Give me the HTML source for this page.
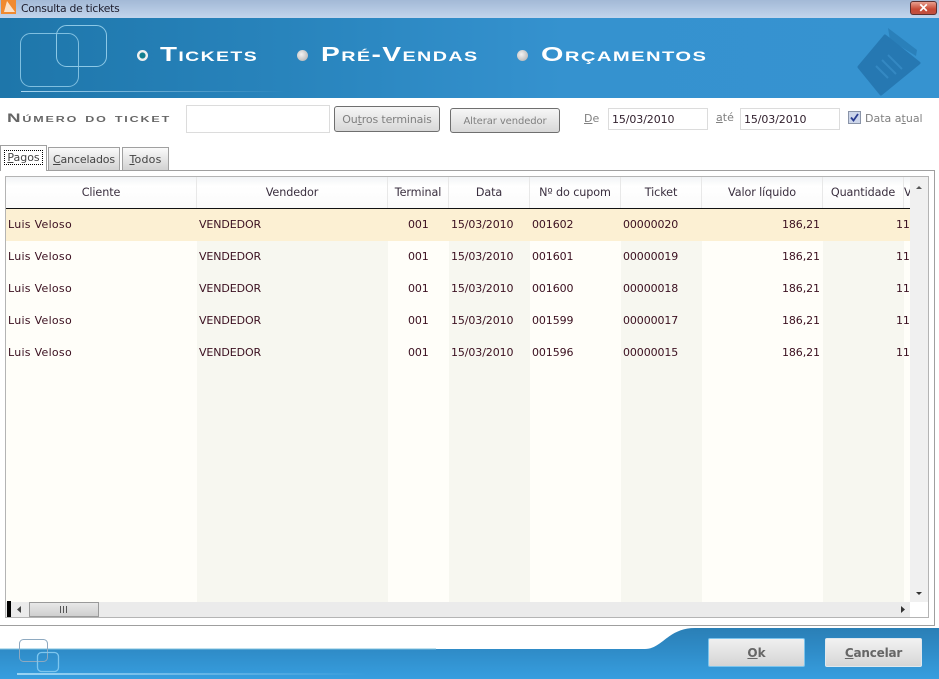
<!DOCTYPE html>
<html><head><meta charset="utf-8"><style>
*{box-sizing:border-box}
html,body{margin:0;padding:0;width:939px;height:679px;overflow:hidden;background:#fff}
body{position:relative;font-family:"DejaVu Sans",sans-serif;font-size:11px;color:#2a1a2a}
.a{position:absolute;white-space:nowrap}
.h{position:absolute;top:177px;height:31px;line-height:32px;text-align:center;color:#3a2f3f;font-size:11.2px;letter-spacing:-.1px;overflow:hidden;border-right:1px solid #e8e8e8}
.c{position:absolute;height:32px;line-height:32px;color:#3b1020;font-size:11px;letter-spacing:-.1px;white-space:nowrap}
.n{letter-spacing:.28px}
.nav{position:absolute;top:44px;color:#fff;font-family:"Liberation Sans",sans-serif;font-weight:bold;font-variant:small-caps;font-size:20px;line-height:22px;transform-origin:0 0;white-space:nowrap;letter-spacing:1px}
.dot{position:absolute;top:50px;width:11px;height:11px;border-radius:50%;background:radial-gradient(circle at 40% 40%,#f2f2f2,#aaa)}
.btn{position:absolute;border:1px solid #6f6f6f;border-radius:3px;background:linear-gradient(#f6f6f6,#d8d8d8);color:#808080;text-align:center}
.inp{position:absolute;border:1px solid #dcdcdc;background:#fff}
.tab{position:absolute;border:1px solid #a0a0a0;border-bottom:none;background:linear-gradient(#fafafa,#d2d2d2);color:#444;text-align:center;font-size:11px}
u{text-decoration:underline}
</style></head><body>
<!-- Title bar -->
<div class="a" style="left:0;top:0;width:939px;height:18px;background:linear-gradient(#a3b9d6,#c2d5ec)"></div>
<svg class="a" style="left:1px;top:0" width="16" height="15"><rect x="0" y="0" width="15" height="14" fill="#f08a30"/><path d="M3 12 L6 1 L14 12Z" fill="#fbe2c8"/></svg>
<div class="a" style="left:21px;top:1px;line-height:15px;font-size:10.8px;letter-spacing:-.25px;color:#1c1c2c">Consulta de tickets</div>
<div class="a" style="left:910px;top:1px;width:27px;height:14px;border:1px solid #5c3030;border-radius:3px;background:linear-gradient(#e9a090,#c84a35 60%,#c05040);color:#fff;font:bold 12px/12px 'Liberation Sans',sans-serif;text-align:center">✕</div>
<!-- Header -->
<div class="a" style="left:0;top:18px;width:939px;height:80px;background:linear-gradient(90deg,#1e76aa,#2a86bf 35%,#3592cf 60%,#3693d0)"></div>
<svg class="a" style="left:0;top:0" width="939" height="98" fill="none">
<defs><linearGradient id="l"><stop offset="0" stop-color="#a9d6f0"/><stop offset="1" stop-color="#a9d6f0" stop-opacity="0"/></linearGradient></defs>
<rect x="20.500" y="33.500" width="58" height="53" rx="10" stroke="#7fbfe0"/>
<rect x="56.500" y="25.500" width="50" height="41" rx="10" stroke="#8cc8e6"/>
<rect x="21" y="91" width="265" height="1" fill="url(#l)"/>
<path d="M888 28 L917 50 L916 56 L890 40Z" fill="#2a80ba"/>
<path d="M885 36 L919 63 L881 94 L859 67Z" fill="#2678b2" stroke="#2678b2" stroke-width="3" stroke-linejoin="round"/>
<path d="M876 66 L888 78 M882 60 L896 74 M888 55 L902 69" stroke="#3488c2" stroke-width="2"/>
</svg>
<div class="dot" style="left:137px;background:radial-gradient(circle,#127f8f 0 2.800px,#f0f0f0 3.300px)"></div>
<div class="nav" style="left:160px;transform:scaleX(1.39)">Tickets</div>
<div class="dot" style="left:297px"></div>
<div class="nav" style="left:321px;transform:scaleX(1.41)">Pré-Vendas</div>
<div class="dot" style="left:517px"></div>
<div class="nav" style="left:541px;transform:scaleX(1.44)">Orçamentos</div>
<!-- Filter row -->
<div class="a" style="left:7px;top:111px;font:bold 12px/15px 'Liberation Sans',sans-serif;font-variant:small-caps;color:#666;letter-spacing:1.2px;transform:scaleX(1.56);transform-origin:0 0">Número do ticket</div>
<div class="inp" style="left:186px;top:105px;width:144px;height:28px"></div>
<div class="btn" style="left:334px;top:106px;width:106px;height:26px;line-height:25px;font-size:11px;letter-spacing:-.15px">Ou<u>t</u>ros terminais</div>
<div class="btn" style="left:450px;top:108px;width:110px;height:25px;line-height:26px;font-size:10px;letter-spacing:-.1px">Alterar vendedor</div>
<div class="a" style="left:584px;top:112px;line-height:14px;color:#808080"><u>D</u>e</div>
<div class="inp" style="left:608px;top:108px;width:100px;height:22px;line-height:21px;padding-left:3px;color:#33222f;letter-spacing:-.1px">15/03/2010</div>
<div class="a" style="left:716px;top:111px;line-height:14px;color:#808080"><u>a</u>té</div>
<div class="inp" style="left:740px;top:108px;width:100px;height:22px;line-height:21px;padding-left:3px;color:#33222f;letter-spacing:-.1px">15/03/2010</div>
<svg class="a" style="left:848px;top:111px" width="14" height="14"><rect x=".5" y=".5" width="12" height="12" fill="#cdd6ea" stroke="#8a94a8"/><path d="M3 6.500 L5.500 9.500 L10 3" fill="none" stroke="#2a3c90" stroke-width="1.800"/></svg>
<div class="a" style="left:865px;top:112px;line-height:14px;color:#808080;letter-spacing:0">Data a<u>t</u>ual</div>
<!-- Panel -->
<div class="a" style="left:-2px;top:170px;width:937px;height:456px;border:1px solid #9f9f9f;background:#fff"></div>
<div class="tab" style="left:0;top:145px;width:47px;height:26px;background:#fff;line-height:24px;z-index:2"><span style="border:1px dotted #000;padding:0 2px"><u>P</u>agos</span></div>
<div class="tab" style="left:48px;top:147px;width:72px;height:23px;line-height:24px;letter-spacing:-.15px"><u>C</u>ancelados</div>
<div class="tab" style="left:122px;top:147px;width:47px;height:23px;line-height:24px;letter-spacing:.2px"><u>T</u>odos</div>
<!-- Grid -->
<div class="a" style="left:5px;top:176px;width:924px;height:442px;border:1px solid #b4b4b4;background:#fff"></div>
<div class="a" style="left:6px;top:177px;width:904px;height:31px;background:linear-gradient(#f2f4f6,#fff 30%,#fafafa)"></div>
<div class="h" style="left:6px;width:191px">Cliente</div>
<div class="h" style="left:197px;width:191px">Vendedor</div>
<div class="h" style="left:388px;width:61px">Terminal</div>
<div class="h" style="left:449px;width:81px">Data</div>
<div class="h" style="left:530px;width:91px">Nº do cupom</div>
<div class="h" style="left:621px;width:81px">Ticket</div>
<div class="h" style="left:702px;width:121px">Valor líquido</div>
<div class="h" style="left:823px;width:81px">Quantidade</div>
<div class="h" style="left:904px;width:6px;border:0;text-align:left;overflow:hidden">V</div>
<div class="a" style="left:6px;top:208px;width:904px;height:1px;background:#111"></div>
<!-- column backgrounds -->
<div class="a" style="left:6px;top:209px;width:191px;height:393px;background:#fffef9"></div>
<div class="a" style="left:197px;top:209px;width:191px;height:393px;background:#f7f7f0"></div>
<div class="a" style="left:388px;top:209px;width:61px;height:393px;background:#fffef9"></div>
<div class="a" style="left:449px;top:209px;width:81px;height:393px;background:#f7f7f0"></div>
<div class="a" style="left:530px;top:209px;width:91px;height:393px;background:#fffef9"></div>
<div class="a" style="left:621px;top:209px;width:81px;height:393px;background:#f7f7f0"></div>
<div class="a" style="left:702px;top:209px;width:121px;height:393px;background:#fffef9"></div>
<div class="a" style="left:823px;top:209px;width:81px;height:393px;background:#f7f7f0"></div>
<div class="a" style="left:904px;top:209px;width:6px;height:393px;background:#fffef9"></div>
<div class="a" style="left:6px;top:209px;width:904px;height:32px;background:#fcf0d3"></div>
<!-- rows -->
<div class="c n" style="left:8px;top:209px">Luis Veloso</div><div class="c" style="left:199px;top:209px">VENDEDOR</div><div class="c" style="left:408px;top:209px">001</div><div class="c" style="left:451px;top:209px">15/03/2010</div><div class="c" style="left:532px;top:209px">001602</div><div class="c" style="left:623px;top:209px">00000020</div><div class="c" style="left:782px;top:209px">186,21</div><div class="c" style="left:896px;top:209px;width:13px;overflow:hidden">11</div>
<div class="c n" style="left:8px;top:241px">Luis Veloso</div><div class="c" style="left:199px;top:241px">VENDEDOR</div><div class="c" style="left:408px;top:241px">001</div><div class="c" style="left:451px;top:241px">15/03/2010</div><div class="c" style="left:532px;top:241px">001601</div><div class="c" style="left:623px;top:241px">00000019</div><div class="c" style="left:782px;top:241px">186,21</div><div class="c" style="left:896px;top:241px;width:13px;overflow:hidden">11</div>
<div class="c n" style="left:8px;top:273px">Luis Veloso</div><div class="c" style="left:199px;top:273px">VENDEDOR</div><div class="c" style="left:408px;top:273px">001</div><div class="c" style="left:451px;top:273px">15/03/2010</div><div class="c" style="left:532px;top:273px">001600</div><div class="c" style="left:623px;top:273px">00000018</div><div class="c" style="left:782px;top:273px">186,21</div><div class="c" style="left:896px;top:273px;width:13px;overflow:hidden">11</div>
<div class="c n" style="left:8px;top:305px">Luis Veloso</div><div class="c" style="left:199px;top:305px">VENDEDOR</div><div class="c" style="left:408px;top:305px">001</div><div class="c" style="left:451px;top:305px">15/03/2010</div><div class="c" style="left:532px;top:305px">001599</div><div class="c" style="left:623px;top:305px">00000017</div><div class="c" style="left:782px;top:305px">186,21</div><div class="c" style="left:896px;top:305px;width:13px;overflow:hidden">11</div>
<div class="c n" style="left:8px;top:337px">Luis Veloso</div><div class="c" style="left:199px;top:337px">VENDEDOR</div><div class="c" style="left:408px;top:337px">001</div><div class="c" style="left:451px;top:337px">15/03/2010</div><div class="c" style="left:532px;top:337px">001596</div><div class="c" style="left:623px;top:337px">00000015</div><div class="c" style="left:782px;top:337px">186,21</div><div class="c" style="left:896px;top:337px;width:13px;overflow:hidden">11</div>
<!-- scrollbars -->
<div class="a" style="left:910px;top:177px;width:18px;height:425px;background:#f0f0f0"></div>
<svg class="a" style="left:910px;top:177px" width="18" height="425"><path d="M6 12 L9 9 L12 12Z" fill="#555"/><path d="M6 415 L9 418 L12 415Z" fill="#333"/></svg>
<div class="a" style="left:6px;top:602px;width:904px;height:15px;background:#ebebeb"></div>
<div class="a" style="left:7px;top:601px;width:4px;height:16px;background:#000"></div>
<svg class="a" style="left:11px;top:602px" width="18" height="15"><path d="M10 4 L6 7.500 L10 11Z" fill="#444"/></svg>
<div class="a" style="left:29px;top:602px;width:70px;height:15px;border:1px solid #9a9a9a;background:linear-gradient(#e8e8e8,#cfcfcf)"></div>
<svg class="a" style="left:29px;top:602px" width="70" height="15"><path d="M31.500 4V11M34.500 4V11M37.500 4V11" stroke="#555"/></svg>
<svg class="a" style="left:896px;top:602px" width="14" height="15"><path d="M5 4 L9 7.500 L5 11Z" fill="#333"/></svg>
<!-- Footer -->
<svg class="a" style="left:0;top:628px" width="939" height="51">
<defs><linearGradient id="f" x1="0" y1="0" x2="0" y2="1"><stop offset="0" stop-color="#2a7fb6"/><stop offset=".45" stop-color="#2f8cc8"/><stop offset="1" stop-color="#379edf"/></linearGradient><linearGradient id="g"><stop offset="0" stop-color="#9ad4f4"/><stop offset="1" stop-color="#9ad4f4" stop-opacity="0"/></linearGradient></defs>
<path d="M0 21 L645 21 C662 21 668 0 695 0 L939 0 L939 51 L0 51Z" fill="url(#f)"/>
<rect x="0" y="20.500" width="436" height="1" fill="#7fc0dc"/>
<rect x="19.500" y="11.500" width="28" height="22" rx="4" fill="none" stroke="#8ea9c0"/>
<rect x="37.500" y="24.500" width="21" height="19" rx="4" fill="none" stroke="#7ec6ee" stroke-width="1.300"/>
<rect x="17" y="45" width="350" height="2" fill="url(#g)"/>
</svg>
<div class="a" style="left:708px;top:638px;width:97px;height:29px;border:1px solid #7cc4ec;border-radius:2px;background:linear-gradient(#f0f0f0,#d4d4d4);text-align:center;line-height:28px;font-weight:bold;font-size:12px;color:#666"><u>O</u>k</div>
<div class="a" style="left:825px;top:638px;width:97px;height:29px;border:1px solid #dfe8ee;border-radius:2px;background:linear-gradient(#f2f2f2,#d6d6d6);text-align:center;line-height:28px;font-weight:bold;font-size:12px;letter-spacing:-.2px;color:#666"><u>C</u>ancelar</div>
</body></html>
